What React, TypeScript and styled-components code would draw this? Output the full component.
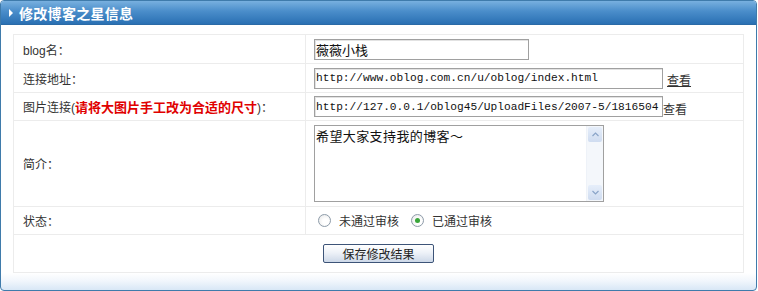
import React from "react";
import styled, { createGlobalStyle } from "styled-components";

const GlobalStyle = createGlobalStyle`
  html, body { margin: 0; padding: 0; background: #ffffff; }
  body { font-family: "Liberation Sans", "Noto Sans CJK SC", sans-serif; font-size: 12px; color: #333; }
`;

const Panel = styled.div`
  width: 757px;
  height: 291px;
  box-sizing: border-box;
  border: 1px solid #3f7bab;
  border-radius: 4px;
  overflow: hidden;
  background: linear-gradient(to bottom, #ffffff 0, #ffffff 272px, #f1f6fc 280px, #d8e7f6 100%);
  display: flex;
  flex-direction: column;
`;

const Header = styled.div`
  height: 24px;
  flex: none;
  display: flex;
  align-items: center;
  gap: 6px;
  padding-left: 8px;
  background: linear-gradient(to bottom, #78b0df 0%, #4a8dca 45%, #2a70b3 100%);
  border-bottom: 1px solid #2a6aa6;
  box-sizing: border-box;
`;

const Arrow = styled.span`
  width: 0;
  height: 0;
  border-top: 4px solid transparent;
  border-bottom: 4px solid transparent;
  border-left: 4px solid #ffffff;
`;

const Title = styled.h1`
  margin: 0;
  font-family: "Noto Sans CJK SC", sans-serif;
  font-size: 14px;
  font-weight: 700;
  color: #ffffff;
  letter-spacing: 0.3px;
  line-height: 24px;
`;

const Body = styled.div`
  padding: 9px 12px 0 12px;
`;

const FormTable = styled.table`
  width: 731px;
  table-layout: fixed;
  border-collapse: collapse;
  border: 1px solid #ececec;
`;

const Row = styled.tr<{ $h: number }>`
  height: ${(p) => p.$h}px;
`;

const LabelCell = styled.td`
  width: 292px;
  box-sizing: border-box;
  padding: 0 0 0 9px;
  border: 1px solid #ececec;
  font-family: "Liberation Sans", "Noto Sans CJK SC", sans-serif;
  font-size: 12px;
  color: #333;
  vertical-align: middle;
`;

const FieldCell = styled.td`
  padding: 0 0 0 8px;
  border: 1px solid #ececec;
  vertical-align: middle;
  white-space: nowrap;
`;

const ActionCell = styled.td`
  border: 1px solid #ececec;
  text-align: center;
  vertical-align: middle;
  padding: 0 0 1px 0;
`;

const Hint = styled.span`
  color: #e00000;
  font-weight: 700;
  font-size: 13px;
`;

const TextInput = styled.input<{ $w: number; $mono?: boolean }>`
  width: ${(p) => p.$w}px;
  height: 21px;
  box-sizing: border-box;
  border: 1px solid #a0a0a0;
  box-shadow: inset 1px 1px 0 #e2e2e2;
  padding: 0 1px;
  margin: 0;
  vertical-align: middle;
  font-family: ${(p) =>
    p.$mono ? '"Liberation Mono", monospace' : '"Noto Sans CJK SC", sans-serif'};
  font-size: ${(p) => (p.$mono ? "11.2px" : "13px")};
  color: #111;
  background: #fff;
  outline: none;
`;

const ViewLink = styled.a<{ $underline?: boolean; $gap: number }>`
  margin-left: ${(p) => p.$gap}px;
  font-family: "Noto Sans CJK SC", sans-serif;
  font-size: 12px;
  color: #333;
  text-decoration: ${(p) => (p.$underline ? "underline" : "none")};
  vertical-align: -4px;
  cursor: pointer;
`;

const AreaBox = styled.div`
  width: 290px;
  height: 77px;
  box-sizing: border-box;
  border: 1px solid #a0a0a0;
  display: flex;
  background: #fff;
`;

const Area = styled.textarea`
  flex: 1;
  border: none;
  resize: none;
  overflow: hidden;
  outline: none;
  padding: 2px 1px;
  margin: 0;
  font-family: "Noto Sans CJK SC", sans-serif;
  font-size: 13px;
  letter-spacing: 0.4px;
  line-height: 16px;
  color: #111;
`;

const ScrollBar = styled.div`
  width: 16px;
  flex: none;
  display: flex;
  flex-direction: column;
  justify-content: space-between;
  background: #f4f7fb;
  border-left: 1px solid #eef2f8;
`;

const ScrollButton = styled.div`
  height: 15px;
  margin: 1px;
  border-radius: 2px;
  background: linear-gradient(to bottom, #e6eefa, #cfdcf0);
  display: flex;
  align-items: center;
  justify-content: center;
`;

const RadioGroup = styled.div`
  display: flex;
  align-items: center;
  padding-left: 4px;
  font-family: "Noto Sans CJK SC", sans-serif;
  font-size: 12px;
  color: #333;
`;

const RadioOption = styled.label`
  display: flex;
  align-items: center;
  gap: 8px;
  margin-right: 12px;
`;

const RadioCircle = styled.span<{ $checked?: boolean }>`
  width: 13px;
  height: 13px;
  box-sizing: border-box;
  border-radius: 50%;
  border: 1px solid #8e9caa;
  background: radial-gradient(circle at 60% 60%, #ffffff 30%, #e4e4e4 100%);
  display: flex;
  align-items: center;
  justify-content: center;
  &::after {
    content: "";
    display: ${(p) => (p.$checked ? "block" : "none")};
    width: 5px;
    height: 5px;
    border-radius: 50%;
    background: #3aa63a;
  }
`;

const SaveButton = styled.button`
  width: 111px;
  height: 19px;
  box-sizing: border-box;
  border: 1px solid #3d5478;
  border-radius: 2px;
  background: linear-gradient(to bottom, #ffffff 0%, #eef2f8 45%, #cdd8e8 100%);
  font-family: "Noto Sans CJK SC", sans-serif;
  font-size: 12px;
  color: #222;
  padding: 0;
  line-height: 17px;
  cursor: pointer;
`;

const Chevron = ({ up }: { up?: boolean }) => (
  <svg width="7" height="5" viewBox="0 0 7 5">
    <path
      d={up ? "M0.5 4 L3.5 1 L6.5 4" : "M0.5 1 L3.5 4 L6.5 1"}
      fill="none"
      stroke="#8aa4c8"
      strokeWidth="1.2"
    />
  </svg>
);

export default function App() {
  return (
    <>
      <GlobalStyle />
      <Panel>
        <Header>
          <Arrow />
          <Title>修改博客之星信息</Title>
        </Header>
        <Body>
          <FormTable>
            <tbody>
              <Row $h={29}>
                <LabelCell>blog名：</LabelCell>
                <FieldCell>
                  <TextInput $w={215} defaultValue="薇薇小栈" />
                </FieldCell>
              </Row>
              <Row $h={29}>
                <LabelCell>连接地址：</LabelCell>
                <FieldCell>
                  <TextInput $w={349} $mono defaultValue="http://www.oblog.com.cn/u/oblog/index.html" />
                  <ViewLink $underline $gap={4}>查看</ViewLink>
                </FieldCell>
              </Row>
              <Row $h={28}>
                <LabelCell>
                  图片连接(<Hint>请将大图片手工改为合适的尺寸</Hint>)：
                </LabelCell>
                <FieldCell>
                  <TextInput $w={349} $mono defaultValue="http://127.0.0.1/oblog45/UploadFiles/2007-5/1816504" />
                  <ViewLink $gap={0}>查看</ViewLink>
                </FieldCell>
              </Row>
              <Row $h={86}>
                <LabelCell>简介：</LabelCell>
                <FieldCell>
                  <AreaBox>
                    <Area defaultValue="希望大家支持我的博客～" />
                    <ScrollBar>
                      <ScrollButton>
                        <Chevron up />
                      </ScrollButton>
                      <ScrollButton>
                        <Chevron />
                      </ScrollButton>
                    </ScrollBar>
                  </AreaBox>
                </FieldCell>
              </Row>
              <Row $h={28}>
                <LabelCell>状态：</LabelCell>
                <FieldCell>
                  <RadioGroup>
                    <RadioOption>
                      <RadioCircle />
                      未通过审核
                    </RadioOption>
                    <RadioOption>
                      <RadioCircle $checked />
                      已通过审核
                    </RadioOption>
                  </RadioGroup>
                </FieldCell>
              </Row>
              <Row $h={38}>
                <ActionCell colSpan={2}>
                  <SaveButton>保存修改结果</SaveButton>
                </ActionCell>
              </Row>
            </tbody>
          </FormTable>
        </Body>
      </Panel>
    </>
  );
}
